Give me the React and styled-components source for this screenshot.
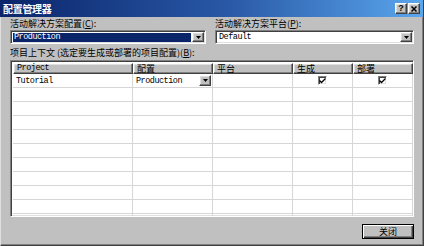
import React from 'react';
import styled, { createGlobalStyle } from 'styled-components';

const CJK = `"Noto Sans CJK SC", "Noto Sans", sans-serif`;
const MONO = `"Liberation Mono", "DejaVu Sans Mono", monospace`;

const Global = createGlobalStyle`
  html, body { margin: 0; padding: 0; background: #c0c0c0; overflow: hidden; }
  * { box-sizing: border-box; }
`;

const raised = `
  border-top: 1px solid #ffffff;
  border-left: 1px solid #ffffff;
  border-right: 1px solid #404040;
  border-bottom: 1px solid #404040;
  box-shadow: inset -1px -1px #808080, inset 1px 1px #dfdfdf;
`;

const sunken = `
  border-top: 1px solid #808080;
  border-left: 1px solid #808080;
  border-right: 1px solid #ffffff;
  border-bottom: 1px solid #ffffff;
  box-shadow: inset 1px 1px #404040, inset -1px -1px #dfdfdf;
`;

const Window = styled.div`
  width: 424px;
  height: 246px;
  background: #c0c0c0;
  border-left: 1px solid #dfdfdf;
  border-right: 1px solid #404040;
  border-bottom: 1px solid #404040;
  box-shadow: inset -1px -1px #808080;
  display: flex;
  flex-direction: column;
  font-family: ${CJK};
  font-size: 9px;
  color: #000;
`;

const TitleBar = styled.div`
  height: 17px;
  margin-left: -1px;
  padding: 0 3px 0 3px;
  display: flex;
  align-items: center;
  justify-content: space-between;
  background: linear-gradient(to right, #0a246a 0%, #2a5aa8 55%, #5aa6ec 100%);
`;

const Title = styled.span`
  color: #fff;
  font-weight: bold;
  font-size: 10px;
  line-height: 17px;
  letter-spacing: -0.3px;
`;

const TitleButtons = styled.div`
  display: flex;
  gap: 1px;
`;

const CaptionButton = styled.div`
  width: 12px;
  height: 11px;
  background: #c0c0c0;
  ${raised}
  display: flex;
  align-items: center;
  justify-content: center;
  font-family: "Liberation Sans", sans-serif;
  font-weight: bold;
  font-size: 9px;
  line-height: 9px;
`;

const Content = styled.div`
  flex: 1;
  padding: 0 9px 0 9px;
  display: flex;
  flex-direction: column;
`;

const TopRow = styled.div`
  display: grid;
  grid-template-columns: 196px 199px;
  column-gap: 9px;
  margin-top: 1px;
`;

const Field = styled.div`
  display: flex;
  flex-direction: column;
`;

const Label = styled.div`
  height: 11px;
  line-height: 11px;
  white-space: nowrap;
  margin-top: ${p => p.$mt || 0}px;
  u { text-decoration: underline; }
`;

const Combo = styled.div`
  margin-top: 1px;
  height: 14px;
  background: #fff;
  ${sunken}
  display: flex;
  align-items: stretch;
  padding: 1px;
`;

const ComboValue = styled.div`
  flex: 1;
  margin: 1px 1px 0 1px;
  padding-left: 1px;
  font-family: ${MONO};
  font-size: 8.5px;
  letter-spacing: -0.5px;
  line-height: 9px;
  background: ${p => (p.$selected ? '#0a246a' : 'transparent')};
  color: ${p => (p.$selected ? '#fff' : '#000')};
`;

const DropButton = styled.div`
  width: 12px;
  background: #c0c0c0;
  ${raised}
  display: flex;
  align-items: center;
  justify-content: center;
`;

const Table = styled.div`
  margin-top: 2px;
  height: 157px;
  background: #fff;
  ${sunken}
  padding: 2px 0 0 2px;
  overflow: hidden;
`;

const Columns = `grid-template-columns: 120px 80px 80px 60px 60px;`;

const HeaderRow = styled.div`
  display: grid;
  ${Columns}
  height: 11px;
`;

const HeaderCell = styled.div`
  background: #c0c0c0;
  ${raised}
  padding-left: 3px;
  display: flex;
  align-items: center;
  line-height: 9px;
  font-family: ${p => (p.$mono ? MONO : CJK)};
  font-size: ${p => (p.$mono ? '8.5px' : '9px')};
  letter-spacing: ${p => (p.$mono ? '-0.5px' : '0')};
  white-space: nowrap;
`;

const Row = styled.div`
  display: grid;
  ${Columns}
  height: 14px;
`;

const Cell = styled.div`
  border-right: 1px solid #d6d6d6;
  border-bottom: 1px solid #d6d6d6;
  display: flex;
  align-items: center;
  justify-content: ${p => (p.$center ? 'center' : 'flex-start')};
  padding-left: ${p => (p.$center ? 0 : 3)}px;
  font-family: ${MONO};
  font-size: 8.5px;
  letter-spacing: -0.5px;
`;

const CellCombo = styled.div`
  flex: 1;
  height: 13px;
  display: flex;
  align-items: center;
  justify-content: space-between;
  padding-right: 1px;
`;

const CellDrop = styled(DropButton)`
  width: 12px;
  height: 11px;
`;

const Check = styled.div`
  width: 9px;
  height: 9px;
  background: #fff;
  ${sunken}
  display: flex;
  align-items: center;
  justify-content: center;
`;

const Footer = styled.div`
  display: flex;
  justify-content: flex-end;
  margin-top: 7px;
`;

const Button = styled.div`
  width: 52px;
  height: 15px;
  background: #c0c0c0;
  border: 1px solid #000;
  box-shadow: inset 1px 1px #fff, inset -1px -1px #404040, inset -2px -2px #808080;
  display: flex;
  align-items: center;
  justify-content: center;
  font-size: 9px;
  line-height: 9px;
`;

const Arrow = () => (
  <svg width="5" height="3" viewBox="0 0 5 3"><path d="M0 0H5L2.5 3Z" fill="#000" /></svg>
);

const CheckMark = () => (
  <svg width="7" height="6" viewBox="0 0 7 6">
    <path d="M0.5 2.5L2.5 4.5L6.5 0.5" stroke="#000" strokeWidth="1.3" fill="none" />
  </svg>
);

const CloseGlyph = () => (
  <svg width="6" height="6" viewBox="0 0 6 6">
    <path d="M0.5 0.5L5.5 5.5M5.5 0.5L0.5 5.5" stroke="#000" strokeWidth="1.5" />
  </svg>
);

const emptyRows = Array.from({ length: 10 });

export default function App() {
  return (
    <>
      <Global />
      <Window>
        <TitleBar>
          <Title>配置管理器</Title>
          <TitleButtons>
            <CaptionButton>?</CaptionButton>
            <CaptionButton><CloseGlyph /></CaptionButton>
          </TitleButtons>
        </TitleBar>
        <Content>
          <TopRow>
            <Field>
              <Label>活动解决方案配置(<u>C</u>):</Label>
              <Combo>
                <ComboValue $selected>Production</ComboValue>
                <DropButton><Arrow /></DropButton>
              </Combo>
            </Field>
            <Field>
              <Label>活动解决方案平台(<u>P</u>):</Label>
              <Combo>
                <ComboValue>Default</ComboValue>
                <DropButton><Arrow /></DropButton>
              </Combo>
            </Field>
          </TopRow>
          <Label $mt={3}>项目上下文 (选定要生成或部署的项目配置)(<u>B</u>):</Label>
          <Table>
            <HeaderRow>
              <HeaderCell $mono>Project</HeaderCell>
              <HeaderCell>配置</HeaderCell>
              <HeaderCell>平台</HeaderCell>
              <HeaderCell>生成</HeaderCell>
              <HeaderCell>部署</HeaderCell>
            </HeaderRow>
            <Row>
              <Cell>Tutorial</Cell>
              <Cell>
                <CellCombo>
                  <span>Production</span>
                  <CellDrop><Arrow /></CellDrop>
                </CellCombo>
              </Cell>
              <Cell />
              <Cell $center><Check><CheckMark /></Check></Cell>
              <Cell $center><Check><CheckMark /></Check></Cell>
            </Row>
            {emptyRows.map((_, i) => (
              <Row key={i}>
                <Cell /><Cell /><Cell /><Cell /><Cell />
              </Row>
            ))}
          </Table>
          <Footer>
            <Button>关闭</Button>
          </Footer>
        </Content>
      </Window>
    </>
  );
}
